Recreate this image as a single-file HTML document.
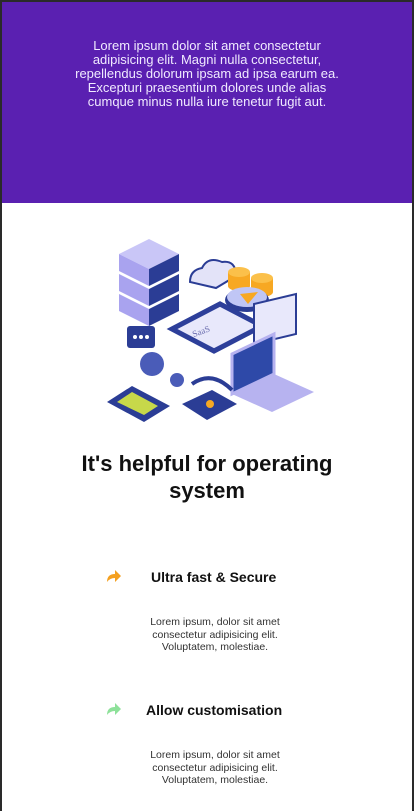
<!DOCTYPE html>
<html><head><style>
*{margin:0;padding:0;box-sizing:border-box}
body{width:414px;height:811px;overflow:hidden;background:#fff;font-family:"Liberation Sans",sans-serif;border:2px solid #2a2a2a;border-bottom:none;position:relative}
.hero{position:absolute;left:0;top:0;width:410px;height:201px;background:#5a20b1;color:#f0eaff;text-align:center;font-size:13px;line-height:14px;padding-top:37px;white-space:nowrap}
h1{position:absolute;top:448px;left:0;width:410px;text-align:center;font-size:22px;line-height:27px;font-weight:bold;color:#111}
.ft{position:absolute;left:0;width:410px}
.ft h3{position:absolute;font-size:14px;font-weight:bold;color:#111;white-space:nowrap}
.ft .ic{position:absolute;left:104px}
.ft p{position:absolute;left:0;width:426px;text-align:center;font-size:10.5px;line-height:12.5px;color:#333}
</style></head><body>
<div class="hero">Lorem ipsum dolor sit amet consectetur<br>adipisicing elit. Magni nulla consectetur,<br>repellendus dolorum ipsam ad ipsa earum ea.<br>Excepturi praesentium dolores unde alias<br>cumque minus nulla iure tenetur fugit aut.</div>
<svg style="position:absolute;left:100px;top:232px" width="220" height="196" viewBox="0 0 220 196">
<g>
<polygon points="17,20 47,5 77,20 47,35" fill="#c9c6f7"/><polygon points="17,20 47,35 47,52 17,37" fill="#a9a3ef"/><polygon points="47,35 77,20 77,37 47,52" fill="#2b3d95"/>
<polygon points="17,40 47,55 47,72 17,57" fill="#a9a3ef"/><polygon points="47,55 77,40 77,57 47,72" fill="#2b3d95"/>
<polygon points="17,60 47,75 47,92 17,77" fill="#a9a3ef"/><polygon points="47,75 77,60 77,77 47,92" fill="#2b3d95"/>
<polygon points="70,95 118,70 160,92 112,117" fill="#e8e8fb" stroke="#2d3f9a" stroke-width="5"/>
<text x="90" y="100" font-size="9" fill="#6d6fb0" font-family="Liberation Serif" transform="rotate(-20 100 97)">SaaS</text>
<path d="M88,48 q0,-12 12,-14 q6,-12 20,-6 q14,-2 14,14 l-20,12 z" fill="#e3e3f8" stroke="#2b3d95" stroke-width="2"/>
<rect x="126" y="38" width="22" height="14" fill="#f7a823"/><ellipse cx="137" cy="52" rx="11" ry="5" fill="#f7a823"/><ellipse cx="137" cy="38" rx="11" ry="5" fill="#fbc04a"/>
<rect x="149" y="44" width="22" height="14" fill="#f7a823"/><ellipse cx="160" cy="58" rx="11" ry="5" fill="#f7a823"/><ellipse cx="160" cy="44" rx="11" ry="5" fill="#fbc04a"/>
<ellipse cx="145" cy="66" rx="22" ry="12" fill="#2b3d95"/><ellipse cx="145" cy="63" rx="20" ry="10" fill="#c0c6f5"/><polygon points="138,60 156,58 146,70" fill="#f7a823"/>
<polygon points="152,70 194,60 194,100 152,110" fill="#e8e8fb" stroke="#2b3d95" stroke-width="2"/>
<polygon points="130,120 172,100 172,140 130,160" fill="#2e49a8" stroke="#b6b2f0" stroke-width="3"/>
<polygon points="130,160 172,140 212,158 170,178" fill="#b7b3f0"/>
<rect x="25" y="92" width="28" height="22" rx="3" fill="#2b3d95"/><circle cx="33" cy="103" r="2" fill="#fff"/><circle cx="39" cy="103" r="2" fill="#fff"/><circle cx="45" cy="103" r="2" fill="#fff"/>
<circle cx="50" cy="130" r="12" fill="#4a5cb8"/><circle cx="75" cy="146" r="7" fill="#4a5cb8"/>
<polygon points="5,168 30,152 68,172 42,188" fill="#2b3d95"/><polygon points="15,168 30,158 56,172 42,181" fill="#c7d84a"/>
<polygon points="80,170 110,156 135,170 105,186" fill="#2b3d95"/><circle cx="108" cy="170" r="4" fill="#f7a823"/>
<path d="M90,150 q20,-14 40,6" stroke="#2b3d95" stroke-width="4" fill="none"/>
</g></svg>
<h1>It's helpful for operating<br>system</h1>
<div class="ft" style="top:567px">
<svg class="ic" width="16" height="14" viewBox="0 0 16 14"><path d="M1,13 q0,-8 8,-8 v-4 l6,6 l-6,6 v-4 q-5,0 -8,4z" fill="#f4a020"/></svg>
<h3 style="left:149px;top:0">Ultra fast &amp; Secure</h3>
<p style="top:47px">Lorem ipsum, dolor sit amet<br>consectetur adipisicing elit.<br>Voluptatem, molestiae.</p>
</div>
<div class="ft" style="top:700px">
<svg class="ic" width="16" height="14" viewBox="0 0 16 14"><path d="M1,13 q0,-8 8,-8 v-4 l6,6 l-6,6 v-4 q-5,0 -8,4z" fill="#8ee19a"/></svg>
<h3 style="left:144px;top:0">Allow customisation</h3>
<p style="top:47px">Lorem ipsum, dolor sit amet<br>consectetur adipisicing elit.<br>Voluptatem, molestiae.</p>
</div>
</body></html>
